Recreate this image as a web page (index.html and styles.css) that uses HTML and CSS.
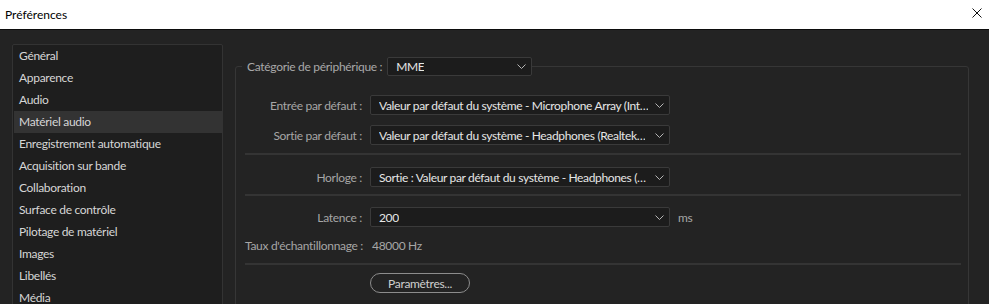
FILE: index.html
```html
<!DOCTYPE html>
<html lang="fr">
<head>
  <meta charset="UTF-8" />
  <title>Préférences</title>
  <link rel="stylesheet" href="styles.css">
</head>
<body>
  <header class="titlebar">
    <span class="title">Préférences</span>
    <svg class="close" width="10" height="10" viewBox="0 0 10 10">
      <path d="M0.5 0.5L9.5 9.5M9.5 0.5L0.5 9.5" stroke="#111" stroke-width="1" fill="none"/>
    </svg>
  </header>

  <main class="window">
    <ul class="nav">
      <li>Général</li>
      <li>Apparence</li>
      <li>Audio</li>
      <li class="active">Matériel audio</li>
      <li>Enregistrement automatique</li>
      <li>Acquisition sur bande</li>
      <li>Collaboration</li>
      <li>Surface de contrôle</li>
      <li>Pilotage de matériel</li>
      <li>Images</li>
      <li>Libellés</li>
      <li>Média</li>
    </ul>

    <fieldset class="group">
      <legend>
        <span class="legend-label">Catégorie de périphérique :</span>
        <div class="select select-mme">
          <span class="value">MME</span>
          <svg class="chev" width="9" height="5" viewBox="0 0 9 5"><path d="M0.5 0.5L4.5 4.5L8.5 0.5" stroke="#b5b5b5" fill="none"/></svg>
        </div>
      </legend>

      <div class="row first">
        <label>Entrée par défaut :</label>
        <div class="select">
          <span class="value">Valeur par défaut du système - Microphone Array (Int…</span>
          <svg class="chev" width="9" height="5" viewBox="0 0 9 5"><path d="M0.5 0.5L4.5 4.5L8.5 0.5" stroke="#b5b5b5" fill="none"/></svg>
        </div>
      </div>
      <div class="row">
        <label>Sortie par défaut :</label>
        <div class="select">
          <span class="value">Valeur par défaut du système - Headphones (Realtek…</span>
          <svg class="chev" width="9" height="5" viewBox="0 0 9 5"><path d="M0.5 0.5L4.5 4.5L8.5 0.5" stroke="#b5b5b5" fill="none"/></svg>
        </div>
      </div>

      <hr class="sep sep-1">

      <div class="row">
        <label>Horloge :</label>
        <div class="select">
          <span class="value">Sortie : Valeur par défaut du système - Headphones (…</span>
          <svg class="chev" width="9" height="5" viewBox="0 0 9 5"><path d="M0.5 0.5L4.5 4.5L8.5 0.5" stroke="#b5b5b5" fill="none"/></svg>
        </div>
      </div>

      <hr class="sep sep-2">

      <div class="row">
        <label>Latence :</label>
        <div class="select">
          <span class="value">200</span>
          <svg class="chev" width="9" height="5" viewBox="0 0 9 5"><path d="M0.5 0.5L4.5 4.5L8.5 0.5" stroke="#b5b5b5" fill="none"/></svg>
        </div>
        <span class="unit">ms</span>
      </div>
      <div class="row rate">
        <label>Taux d'échantillonnage :</label>
        <span class="rate-value">48000 Hz</span>
      </div>

      <hr class="sep sep-3">

      <div class="row">
        <label></label>
        <button class="btn">Paramètres...</button>
      </div>
    </fieldset>
  </main>
</body>
</html>
```

FILE: styles.css
```css
html, body {
  margin: 0;
  height: 100%;
  overflow: hidden;
}

body {
  background-color: #232323;
  font-family: Lato, "Liberation Sans", sans-serif;
  font-size: 12px;
  letter-spacing: -0.3px;
  color: #d4d4d4;
}

.titlebar {
  height: 29px;
  background-color: #ffffff;
  border-bottom: 1px solid #0c0c0c;
  display: flex;
  align-items: center;
  justify-content: space-between;
  padding: 0 7px 0 5px;
}

.title {
  color: #000;
  font-size: 12px;
  letter-spacing: 0;
  margin-top: -1px;
}

.close {
  margin-top: -3px;
}

.window {
  display: flex;
  align-items: flex-start;
  gap: 12px;
  padding: 0 20px 0 12px;
}

/* left category list */
.nav {
  list-style: none;
  margin: 14px 0 0;
  padding: 0 0 0 1px;
  width: 208px;
  height: 300px;
  background-color: #1e1e1e;
  border: 1px solid #333333;
  border-radius: 2px;
}

.nav li {
  height: 22px;
  line-height: 22px;
  padding-left: 5px;
  color: #d6d6d6;
  white-space: nowrap;
}

.nav li.active {
  background-color: #333333;
}

/* group box */
.group {
  flex: 1;
  margin: 27px 0 0;
  padding: 0 0 40px;
  min-width: 0;
  border: 1px solid #363636;
  border-radius: 3px;
}

.group legend {
  display: flex;
  align-items: center;
  gap: 5px;
  margin-left: 6px;
  padding: 0 0 0 5px;
}

.legend-label {
  color: #a9a9a9;
}

.select {
  box-sizing: border-box;
  width: 300px;
  height: 20px;
  display: flex;
  align-items: center;
  justify-content: space-between;
  padding: 0 5px 0 8px;
  background-color: #1c1c1c;
  border: 1px solid #3a3a3a;
  border-radius: 2px;
  color: #e6e6e6;
}

.select-mme {
  width: 145px;
  height: 19px;
}

.select .value {
  white-space: nowrap;
  overflow: hidden;
  text-overflow: ellipsis;
  letter-spacing: -0.35px;
}

.chev {
  flex-shrink: 0;
  margin-left: 4px;
}

.row {
  display: flex;
  align-items: center;
  height: 20px;
  margin: 10px 0 0 9px;
}

.row.first {
  margin-top: 19px;
}

.row label {
  width: 117px;
  flex-shrink: 0;
  text-align: right;
  padding-right: 8px;
  color: #a6a6a6;
  white-space: nowrap;
}

.unit {
  margin-left: 8px;
  color: #a6a6a6;
}

.rate {
  margin-top: 8px;
}

.rate label {
  text-align: left;
  padding-right: 0;
  width: 125px;
}

.rate-value {
  margin-left: 2px;
  color: #a6a6a6;
}

.sep {
  height: 2px;
  border: 0;
  background-color: #343434;
  margin: 0 7px 0 9px;
}

.sep-1 {
  margin-top: 8px;
}

.sep-2 {
  margin-top: 7px;
}

.sep-3 {
  margin-top: 8px;
}

.sep-1 + .row {
  margin-top: 12px;
}

.sep-2 + .row {
  margin-top: 11px;
}

.sep-3 + .row {
  margin-top: 8px;
}

.btn {
  box-sizing: border-box;
  width: 100px;
  height: 20px;
  background-color: #232323;
  border: 1px solid #8c8c8c;
  border-radius: 10px;
  color: #cfcfcf;
  font-family: inherit;
  font-size: 12px;
  letter-spacing: -0.3px;
  padding: 0;
}
```
